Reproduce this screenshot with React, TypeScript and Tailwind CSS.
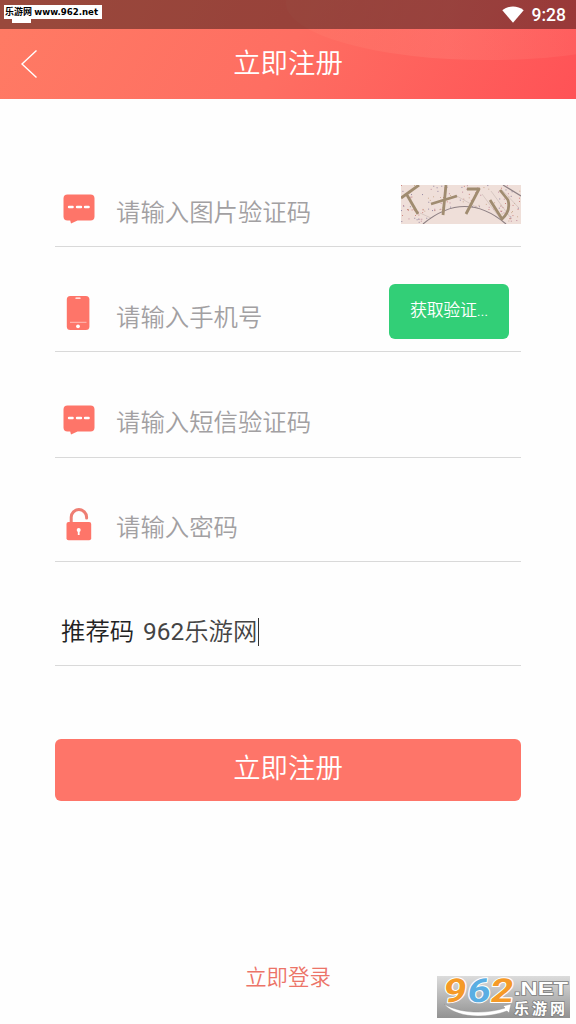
import React from 'react';
import clsx from 'clsx';

const ACCENT = '#fe7569';

const MessageIcon: React.FC = () => (
    <svg width="32" height="30" viewBox="0 0 32 30" className="-mt-1.5 -ml-px">
        <path
            d="M4.5 0.5h23a4 4 0 0 1 4 4v18a4 4 0 0 1-4 4H14.5L8 29.5 7.2 26.5H4.5a4 4 0 0 1-4-4v-18a4 4 0 0 1 4-4z"
            fill={ACCENT}
        />
        <path d="M6 13h3.6M14 13h4M22 13h3.6" stroke="#fff" strokeWidth="2.4" strokeLinecap="round" />
    </svg>
);

const PhoneIcon: React.FC = () => (
    <svg width="24" height="36" viewBox="0 0 24 36" className="-mt-[9px] -ml-0.5">
        <rect x="0.8" y="1" width="22.6" height="34" rx="3.5" fill={ACCENT} />
        <path d="M10 3.2h4" stroke="#fff" strokeWidth="1.3" strokeLinecap="round" />
        <path d="M4 27.3h16.5" stroke="#ffd0ca" strokeWidth="0.8" />
        <circle cx="12" cy="31.3" r="1.9" fill="#fff" />
    </svg>
);

const LockIcon: React.FC = () => (
    <svg width="26" height="33" viewBox="0 0 26 33" className="-mt-[7px]">
        <path d="M5.2 15V9.3a7.7 7.7 0 0 1 15.4 0v.7" fill="none" stroke="#ee7e73" strokeWidth="3" strokeLinecap="round" />
        <rect x="0.5" y="14" width="24.7" height="18.3" rx="2" fill={ACCENT} />
        <circle cx="12.7" cy="22" r="2" fill="#fff" />
        <path d="M12.7 22v5" stroke="#fff" strokeWidth="1.8" />
    </svg>
);

const specks = Array.from({ length: 190 }, (_, i) => ({
    x: (i * i * 7.31 + i * 13.7) % 119,
    y: (i * i * 3.17 + i * 5.9) % 38,
    color: ['#c1625e', '#6f628c', '#bd9876', '#b06c86'][i % 4],
})).filter((s) => (s.x - 64) ** 2 / 1600 + (s.y - 38) ** 2 / 260 > 1);

const Captcha: React.FC = () => (
    <svg width="120" height="39" viewBox="0 0 120 39" className="-mt-[15px] shrink-0">
        <rect width="120" height="39" fill="#efdfd9" />
        {specks.map((s, i) => (
            <rect key={i} x={s.x} y={s.y} width="1" height="1" fill={s.color} opacity="0.7" />
        ))}
        <path
            d="M19 28 30 33M54 10l23 13M81 9l20 27M90 6l19 26M101 5l17 18"
            fill="none"
            stroke="#cdbdb8"
            strokeWidth="0.7"
        />
        <path d="M22 39Q64 4 105 39M102 0l18 11" fill="none" stroke="#8e8084" strokeWidth="1.2" />
        <path
            d="M0 13 18 0M6 10l11 19M45 0l-3 30M30 19l26-8M66 4h12L65 29M89 15l12 19Q110 26 107 15L99 5"
            fill="none"
            stroke="#a08c70"
            strokeWidth="2.8"
            strokeLinejoin="round"
        />
    </svg>
);

interface FieldProps {
    icon: React.ReactNode;
    placeholder: string;
    className?: string;
    children?: React.ReactNode;
}

const Field: React.FC<FieldProps> = ({ icon, placeholder, className = 'h-[105px]', children }) => (
    <div className={clsx('flex items-center border-b border-[#d9d9d9] pt-9', className)}>
        <div className="flex w-12 shrink-0 justify-center">{icon}</div>
        <span className="ml-[13px] flex-1 pt-px text-[24.4px] leading-9 font-[350] text-[#a2a0a2]">{placeholder}</span>
        {children}
    </div>
);

const Header: React.FC = () => (
    <header className="relative h-[99px] bg-linear-[120deg] from-[#ff7b64] via-[#fe6e62] to-[#ff5256] text-white">
        <svg width="576" height="99" className="absolute inset-0">
            <defs>
                <linearGradient id="glow" x1="0" x2="1">
                    <stop offset="0" stopColor="#ff8a73" stopOpacity="0.15" />
                    <stop offset="0.4" stopColor="#ff8a80" stopOpacity="0.3" />
                    <stop offset="1" stopColor="#ff8a80" stopOpacity="0.05" />
                </linearGradient>
            </defs>
            <ellipse cx="488" cy="3" rx="202" ry="57" fill="url(#glow)" />
        </svg>
        <div className="relative flex h-[29px] items-center justify-end bg-black/40 pr-[10px]">
            <svg width="22" height="17" viewBox="0 0 22 17" className="mr-2">
                <path d="M0.3 4.2C6.5-.7 15.5-.7 21.7 4.2L11 16.8z" fill="#fff" />
            </svg>
            <span className="pt-0.5 font-[Roboto] text-[17.5px] font-medium">9:28</span>
            <div className="absolute top-[18px] left-3 h-[5px] w-[19px] bg-white" />
            <div className="absolute top-[5px] left-1 h-[14px] w-[98px] bg-white pl-px text-[9px] leading-[15px] font-bold whitespace-nowrap text-black">
                乐游网 <span className="font-['DejaVu_Sans'] text-[8.6px]">www.962.net</span>
            </div>
        </div>
        <div className="relative flex h-[70px] items-center justify-center">
            <svg width="18" height="30" viewBox="0 0 18 30" className="absolute top-5 left-5">
                <path d="M16.5 1.5 2 15l14.5 13.5" fill="none" stroke="#fff" strokeWidth="1.4" />
            </svg>
            <h1 className="text-[27.4px] leading-10 font-[350]">立即注册</h1>
        </div>
    </header>
);

const SiteBadge: React.FC = () => (
    <svg width="133" height="42" viewBox="0 0 133 42" className="absolute right-[6px] bottom-[6px] overflow-visible">
        <defs>
            <linearGradient id="badge" x1="0" x2="0" y1="0" y2="1">
                <stop offset="0" stopColor="#dcdcdc" />
                <stop offset="1" stopColor="#929292" />
            </linearGradient>
        </defs>
        <rect width="133" height="42" fill="url(#badge)" />
        <g
            fontFamily="Roboto"
            fontWeight="bold"
            fontSize="33"
            stroke="#fff"
            strokeWidth="2"
            paintOrder="stroke"
            strokeLinejoin="round"
            transform="translate(3 0) skewX(-8)"
        >
            <text x="6" y="26" fill="#f59a27" textLength="23" lengthAdjust="spacingAndGlyphs">9</text>
            <text x="30" y="26" fill="#5aaee3" textLength="23" lengthAdjust="spacingAndGlyphs">6</text>
            <text x="53" y="26" fill="#f59a27" textLength="23" lengthAdjust="spacingAndGlyphs">2</text>
        </g>
        <g fill="#fff" stroke="#808080" strokeWidth="1.5" paintOrder="stroke" fontWeight="bold">
            <text x="77" y="19" fontFamily="Liberation Sans" fontSize="18.5" textLength="54" lengthAdjust="spacingAndGlyphs">
                .NET
            </text>
            <text x="77" y="38" fontFamily="Noto Sans CJK SC" fontSize="15" textLength="51">乐游网</text>
        </g>
        <path d="M7 28C24 38 49 38 68 32l-2-2 8-2-2 9-2-2C48 43 19 42 7 28z" fill="#fff" stroke="#888" strokeWidth="0.4" />
    </svg>
);

export default function App() {
    return (
        <div className="relative flex h-[1024px] w-[576px] flex-col overflow-hidden bg-[#fefefe] font-[Roboto,'Noto_Sans_CJK_SC',sans-serif]">
            <Header />
            <main className="flex flex-col px-[55px] pt-[43px]">
                <Field icon={<MessageIcon />} placeholder="请输入图片验证码">
                    <Captcha />
                </Field>
                <Field icon={<PhoneIcon />} placeholder="请输入手机号">
                    <button className="-mt-[11px] mr-3 h-[55px] w-[120px] rounded-md bg-[#32cf77] pb-0.5 text-[17px] font-[350] tracking-[-0.3px] text-white">
                        获取验证...
                    </button>
                </Field>
                <Field icon={<MessageIcon />} placeholder="请输入短信验证码" className="h-[106px]" />
                <Field icon={<LockIcon />} placeholder="请输入密码" className="h-[104px]" />
                <div className="flex h-[104px] items-center border-b border-[#d9d9d9] pt-9 pl-1.5 text-[24.4px] leading-9 font-[350]">
                    <label className="w-[82px] text-[#222]">推荐码</label>
                    <span className="text-[#444]">
                        <span className="font-normal">962</span>乐游网
                    </span>
                    <span className="ml-px h-7 w-px bg-[#333]" />
                </div>
                <button className="mt-[73px] h-[62px] rounded-md bg-[#fe7569] text-[27.4px] font-[350] text-white">
                    立即注册
                </button>
            </main>
            <a className="mt-[161px] self-center text-[21.4px] leading-8 font-[350] text-[#ec7468]">立即登录</a>
            <SiteBadge />
        </div>
    );
}
